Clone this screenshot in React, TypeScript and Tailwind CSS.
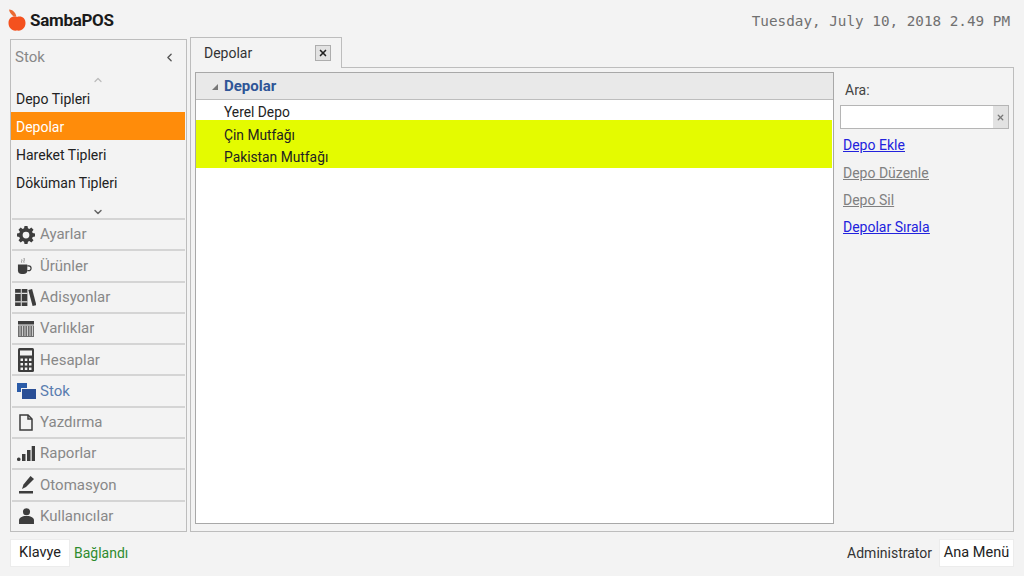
import { ChevronLeft, ChevronUp, ChevronDown, X } from 'lucide-react';
import { ReactNode } from 'react';

const Gear = () => (
  <svg viewBox="0 0 24 24" className="w-[18px] h-[18px]" fill="#3d3d3d">
    <path fillRule="evenodd" d="M10 1h4l.6 3.100 1.900.8L19.100 3 22 5.900l-1.900 2.600.8 1.900L24 11v4l-3.100.6-.8 1.900 1.900 2.600L19.100 23l-2.600-1.900-1.900.8L14 25h-4l-.6-3.100-1.900-.8L4.900 23 2 20.100l1.900-2.600-.8-1.900L0 15v-4l3.100-.6.8-1.900L2 5.900 4.900 3l2.600 1.900 1.900-.8zM12 8.500a4.500 4.500 0 1 0 0 9 4.500 4.500 0 0 0 0-9z" transform="translate(0 -1)" />
  </svg>
);

const Cup = () => (
  <svg viewBox="0 0 16 20" className="w-[15px] h-[19px] -ml-[3px]" fill="#3d3d3d">
    <path d="M1 9h10v6a4 4 0 0 1-4 4H5a4 4 0 0 1-4-4z" />
    <path d="M11 10.500h1.500a2.500 2.500 0 0 1 0 5H11" fill="none" stroke="#3d3d3d" strokeWidth="1.300" />
    <path d="M5 7c-1-1.500 1-2 0-3.500M7.500 7c-1-1.500 1-2 0-5" fill="none" stroke="#8a8a8a" strokeWidth="1" />
  </svg>
);

const Books = () => (
  <svg viewBox="0 0 22 18" className="w-[21px] h-[17px] -ml-[2px]" fill="#3d3d3d">
    <rect x="0" y="0" width="6" height="18" />
    <rect x="7" y="0" width="6" height="18" />
    <path d="M14 1l4-1 4.500 17-4 1z" />
    <rect x="0" y="4" width="6" height="1.200" fill="#f2f2f2" />
    <rect x="7" y="4" width="6" height="1.200" fill="#f2f2f2" />
    <rect x="0" y="13" width="6" height="1.200" fill="#f2f2f2" />
    <rect x="7" y="13" width="6" height="1.200" fill="#f2f2f2" />
  </svg>
);

const Register = () => (
  <svg viewBox="0 0 16 16" className="w-[16px] h-[16px]" fill="#3d3d3d">
    <rect x="0" y="0" width="16" height="3.500" />
    <rect x="0" y="4.500" width="16" height="11.500" fill="#6e6e6e" />
    <path d="M2 5v10M4.500 5v10M7 5v10M9.500 5v10M12 5v10M14.500 5v10" stroke="#e5e5e5" strokeWidth="0.800" />
  </svg>
);

const Calculator = () => (
  <svg viewBox="0 0 16 24" className="w-[16px] h-[24px]">
    <rect x="0" y="0" width="16" height="24" rx="1.500" fill="#3d3d3d" />
    <rect x="2" y="2.500" width="12" height="5" fill="#f2f2f2" />
    <path d="M2.500 10.500h2.500v2.500H2.500zM6.800 10.500h2.500v2.500H6.800zM11 10.500h2.500v2.500H11zM2.500 15h2.500v2.500H2.500zM6.800 15h2.500v2.500H6.800zM11 15h2.500v2.500H11zM2.500 19.500h2.500V22H2.500zM6.800 19.500h2.500V22H6.800zM11 19.500h2.500V22H11z" fill="#f2f2f2" />
  </svg>
);

const Stack = () => (
  <svg viewBox="0 0 19 16" className="w-[19px] h-[16px]">
    <rect x="0" y="0" width="10" height="9" fill="#2a5ba8" />
    <rect x="4" y="5" width="15" height="11" fill="#f3f3f3" />
    <rect x="5" y="6" width="14" height="10" fill="#2a4f96" />
  </svg>
);

const Doc = () => (
  <svg viewBox="0 0 14 17" className="w-[14px] h-[17px]" fill="none" stroke="#3d3d3d" strokeWidth="1.500">
    <path d="M1 1h8l4 4v11H1z" />
    <path d="M9 1v4h4" />
  </svg>
);

const Bars = () => (
  <svg viewBox="0 0 18 15" className="w-[18px] h-[15px]" fill="#3d3d3d">
    <rect x="0" y="11.500" width="3.500" height="3.500" rx="1.500" />
    <rect x="5" y="8" width="3.500" height="7" />
    <rect x="10" y="4" width="3.500" height="11" />
    <rect x="14.700" y="0" width="3.300" height="15" />
  </svg>
);

const Pen = () => (
  <svg viewBox="0 0 15 18" className="w-[15px] h-[18px]" fill="#3d3d3d">
    <path d="M11.500 0L15 3 7 11 3 13l1.500-4.500z" />
    <rect x="0" y="15" width="14" height="2.500" />
  </svg>
);

const UserIcon = () => (
  <svg viewBox="0 0 14 15" className="w-[15px] h-[16px]" fill="#3d3d3d">
    <circle cx="7" cy="3.500" r="3.300" />
    <path d="M0 15v-3.500C0 9 3 8 4.800 7.500h4.400C11 8 14 9 14 11.500V15z" />
  </svg>
);

const navItems: { label: string; icon: ReactNode; active?: boolean }[] = [
  { label: 'Ayarlar', icon: <Gear /> },
  { label: 'Ürünler', icon: <Cup /> },
  { label: 'Adisyonlar', icon: <Books /> },
  { label: 'Varlıklar', icon: <Register /> },
  { label: 'Hesaplar', icon: <Calculator /> },
  { label: 'Stok', icon: <Stack />, active: true },
  { label: 'Yazdırma', icon: <Doc /> },
  { label: 'Raporlar', icon: <Bars /> },
  { label: 'Otomasyon', icon: <Pen /> },
  { label: 'Kullanıcılar', icon: <UserIcon /> },
];

const subItems = ['Depo Tipleri', 'Depolar', 'Hareket Tipleri', 'Döküman Tipleri'];

export default function App() {
  return (
    <div className="w-[1024px] h-[576px] bg-[#f3f3f3] overflow-hidden flex flex-col text-[#222] font-['Roboto','Liberation_Sans',sans-serif]">
      {/* top bar */}
      <div className="h-[37px] flex items-start justify-between pl-[8px] pr-[14px] pt-[9px] shrink-0">
        <div className="flex items-center gap-[4px]">
          <svg viewBox="0 0 18 22" className="w-[18px] h-[22px] -mt-[1px]">
            <path d="M1 .5c2 0 4.500 1 6 3.500 1 1.500 1 2.500 1.500 3.500L6 7.500C3.500 6 1.500 3.500 1 .5z" fill="#ea6a33" />
            <path d="M9 21.500c-5 1-8.500-3-8.500-7.500C.5 9.500 4 6.500 9 8c5-1.500 8.500 1.500 8.500 6S14 22.500 9 21.500z" fill="#f4511e" />
          </svg>
          <span className="text-[17px] font-bold tracking-[-0.3px] text-[#1a1a1a] leading-[22px]">SambaPOS</span>
        </div>
        <span className="font-['DejaVu_Sans_Mono',monospace] text-[14.300px] leading-[22px] text-[#707070] mt-[1px]">
          Tuesday, July 10, 2018 2.49 PM
        </span>
      </div>

      <div className="flex gap-[3px] pl-[10px] pr-[10px] h-[495px] shrink-0">
        {/* sidebar */}
        <div className="w-[177px] mt-[2px] h-[493px] border border-[#bdbdbd] flex flex-col pr-[1px]">
          <div className="h-[34px] flex items-center justify-between pl-[4px] pr-[9px] text-[#888] text-[15px]">
            <span>Stok</span>
            <ChevronLeft size={13} strokeWidth={2.500} className="text-[#555]" />
          </div>
          <div className="h-[11px] flex justify-center items-center">
            <ChevronUp size={12} strokeWidth={2.500} className="text-[#bbb]" />
          </div>
          <div className="flex flex-col mt-[-1px]">
            {subItems.map((item) => (
              <div
                key={item}
                className={`h-[28px] flex items-center pl-[5px] pt-[2px] text-[14px] ${
                  item === 'Depolar' ? 'bg-[#ff8c0a] text-white' : 'text-[#222]'
                }`}
              >
                {item}
              </div>
            ))}
          </div>
          <div className="h-[22px] flex justify-center items-end">
            <ChevronDown size={12} strokeWidth={3} className="text-[#666]" />
          </div>
          <div className="flex-1 flex flex-col">
            {navItems.map((nav) => (
              <div key={nav.label} className="flex-1 flex items-center border-t-2 border-[#d4d4d4] ml-[1px]">
                <div className="w-[28px] flex justify-center shrink-0">{nav.icon}</div>
                <span className={`text-[15px] ${nav.active ? 'text-[#5a7db0]' : 'text-[#888]'}`}>{nav.label}</span>
              </div>
            ))}
          </div>
        </div>

        {/* main */}
        <div className="flex-1 flex flex-col">
          <div className="h-[31px] flex shrink-0 relative z-10">
            <div className="w-[152px] h-[31px] border border-b-0 border-[#bdbdbd] bg-[#f3f3f3] flex items-center justify-between pl-[13px] pr-[10px] text-[14px] text-[#333]">
              <span>Depolar</span>
              <button className="w-[16px] h-[16px] bg-[#e2e2e2] border border-[#adadad] flex items-center justify-center">
                <X size={10} strokeWidth={4} className="text-[#222]" />
              </button>
            </div>
          </div>
          <div className="h-[465px] -mt-[1px] border border-[#bdbdbd] flex pl-[4px] pt-[4px] pb-[7px]">
            <div className="w-[639px] border border-[#a8a8a8] bg-white flex flex-col">
              <div className="h-[27px] bg-[#e9e9e9] border-b border-[#bdbdbd] flex items-center pl-[16px] pt-[1px] gap-[6px] shrink-0">
                <svg viewBox="0 0 6 6" className="w-[6px] h-[6px]" fill="#777">
                  <path d="M6 0v6H0z" />
                </svg>
                <span className="text-[15px] font-bold text-[#2f5597]">Depolar</span>
              </div>
              <div className="h-[20px] flex items-center pl-[28px] pt-[4px] text-[13.800px] text-[#222]">Yerel Depo</div>
              <div className="h-[48px] mr-[1px] bg-[#e4fb00] flex flex-col pt-[4px] text-[13.800px] text-[#222]">
                <div className="h-[23px] flex items-center pl-[28px]">Çin Mutfağı</div>
                <div className="h-[23px] flex items-center pl-[28px]">Pakistan Mutfağı</div>
              </div>
            </div>
            <div className="flex-1 flex flex-col pl-[6px] pr-[4px]">
              <div className="h-[29px] flex items-end pl-[5px] text-[14px] text-[#444] leading-[18px] pb-[2px]">Ara:</div>
              <div className="mt-[4px] h-[24px] bg-white border border-[#b5b5b5] flex justify-end">
                <div className="w-[15px] h-full bg-[#e2e2e2] flex items-center justify-center">
                  <X size={9} strokeWidth={3.500} className="text-[#777]" />
                </div>
              </div>
              <div className="flex flex-col pl-[3px] pt-[6px] text-[14px] underline">
                <a className="h-[27.500px] text-[#2222dd] leading-[20px]">Depo Ekle</a>
                <a className="h-[27.300px] text-[#808080] leading-[20px]">Depo Düzenle</a>
                <a className="h-[27.300px] text-[#808080] leading-[20px]">Depo Sil</a>
                <a className="h-[27.300px] text-[#2222dd] leading-[20px]">Depolar Sırala</a>
              </div>
            </div>
          </div>
        </div>
      </div>

      {/* bottom bar */}
      <div className="flex-1 flex items-start justify-between pl-[10px] pr-[10px] pt-[7px]">
        <div className="flex items-center gap-[4px]">
          <button className="w-[60px] h-[28px] bg-white border border-[#ececec] text-[14.500px] text-[#222]">Klavye</button>
          <span className="text-[14px] text-[#2e8b2e]">Bağlandı</span>
        </div>
        <div className="flex items-center gap-[7px]">
          <span className="text-[14px] text-[#333]">Administrator</span>
          <button className="w-[75px] h-[28px] bg-white border border-[#ececec] text-[14.500px] text-[#222]">Ana Menü</button>
        </div>
      </div>
    </div>
  );
}
